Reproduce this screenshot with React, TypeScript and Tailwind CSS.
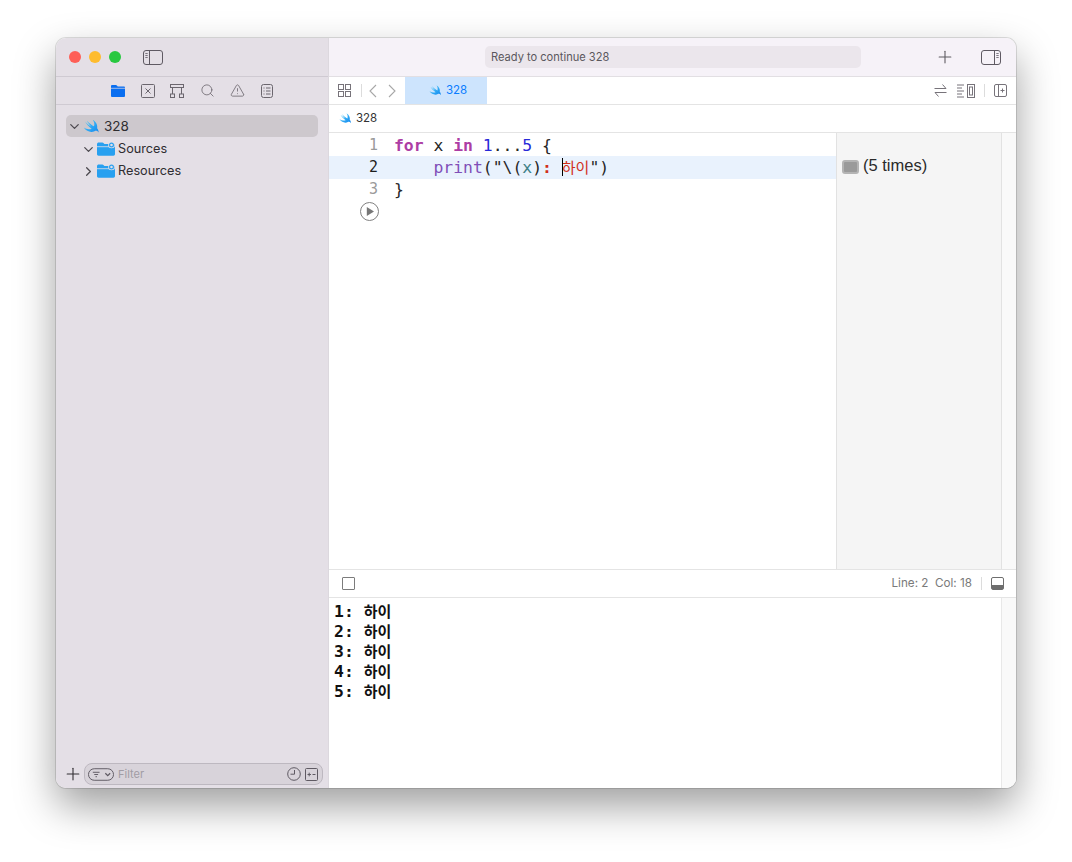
import { ChevronDown, ChevronRight, Plus, Search, TriangleAlert } from "lucide-react";

const mono = "[font-family:'DejaVu_Sans_Mono','Noto_Sans_CJK_KR',monospace]";

function Swift({ size }: { size: number }) {
    return (
        <svg width={size} height={size} viewBox="0 0 24 24" className="shrink-0">
            <defs>
                <linearGradient id="swiftFill" x1="0" y1="0" x2="1" y2="1">
                    <stop offset="0" stopColor="#4fd0fb" />
                    <stop offset="1" stopColor="#1487ee" />
                </linearGradient>
            </defs>
            <path
                d="M1 13.500C5 16.200 9.500 16.500 12.200 15C8.500 12.500 5 9 2.800 5C6 8.500 9.500 11 11.800 12.400C9.200 9.800 6.800 6.800 5.300 3.500C8.500 7.300 12.800 10.500 15.500 11.800C16.800 8.500 15.500 5 13.800 2.500C18.300 5.300 21 10.300 19.900 14.400C21.500 16.400 22.300 18.600 21.800 20.300C20.300 18.100 18 17.700 16.300 18.600C11.500 21 5 19.300 1 13.500Z"
                fill="url(#swiftFill)"
            />
        </svg>
    );
}

function FolderBadge({ className = "" }: { className?: string }) {
    return (
        <svg width="18" height="14" viewBox="0 0 18 14" className={className}>
            <path d="M0 2.200C0 1 .8.4 1.800.4h3.400c.7 0 1 .3 1.500.8l.7.8h9c1 0 1.600.6 1.600 1.600v8.500c0 1-.6 1.600-1.600 1.600H1.600C.6 13.700 0 13 0 12z" fill="#28a0f0" />
            <path d="M0 4.700h17.800" stroke="#e4dfe6" strokeWidth=".8" />
            <circle cx="14.500" cy="3" r="3.300" fill="#e4dfe6" />
            <circle cx="14.500" cy="3" r="1.900" fill="none" stroke="#28a0f0" strokeWidth="1.200" />
        </svg>
    );
}

function NavIcons() {
    const c = "#6b666e";
    return (
        <div className="h-[28px] flex items-center justify-center gap-[15.500px] border-b border-[#cfcad2]">
            <svg width="14" height="12" viewBox="0 0 14 12">
                <path d="M0 1.300C0 .5.500 0 1.300 0h3.500c.5 0 .8.200 1.100.5l.8.900h6c.800 0 1.300.5 1.300 1.300v8c0 .8-.5 1.300-1.300 1.300H1.300C.5 12 0 11.500 0 10.700z" fill="#0a6ef0" />
                <path d="M0 3.300h14" stroke="#e4dfe6" strokeWidth=".7" />
            </svg>
            <svg width="14" height="14" viewBox="0 0 14 14" fill="none" stroke={c}>
                <rect x=".5" y=".5" width="13" height="13" rx="1" />
                <path d="M4.500 4.500l5 5M9.500 4.500l-5 5" />
            </svg>
            <svg width="14" height="14" viewBox="0 0 14 14" fill="none" stroke={c}>
                <rect x=".5" y=".5" width="13" height="3" />
                <rect x=".5" y="10" width="4" height="3.500" />
                <rect x="9.500" y="10" width="4" height="3.500" />
                <path d="M2.500 3.500V10M11.500 3.500V10" />
            </svg>
            <Search size={15} strokeWidth={1.300} color={c} />
            <TriangleAlert size={15} strokeWidth={1.300} color={c} />
            <svg width="12" height="14" viewBox="0 0 12 14" fill="none" stroke={c}>
                <rect x=".5" y=".5" width="11" height="13" rx="2" />
                <path d="M2.500 4h1M5 4h4.500M2.500 7h1M5 7h4.500M2.500 10h1M5 10h4.500" />
            </svg>
        </div>
    );
}

function Sidebar() {
    return (
        <div className="w-[273px] shrink-0 bg-[#e4dfe6] flex flex-col border-r border-[#dcd8de]">
            <div className="h-[39px] flex items-center pl-[13px] border-b border-[#cfcad2]">
                <span className="w-3 h-3 rounded-full bg-[#fe5f57]" />
                <span className="w-3 h-3 rounded-full bg-[#febc2e] ml-2" />
                <span className="w-3 h-3 rounded-full bg-[#28c840] ml-2" />
                <svg width="20" height="15" viewBox="0 0 20 15" fill="none" stroke="#5f5a63" className="ml-[22px]">
                    <rect x=".5" y=".5" width="19" height="14" rx="2.500" />
                    <path d="M6.500 .5v14" />
                    <path d="M2.300 3.500h2.400M2.300 5.500h2.400M2.300 7.500h2.400" strokeWidth=".8" />
                </svg>
            </div>
            <NavIcons />
            <div className="flex-1 pt-[10px] px-[10px] text-[12.700px] text-[#2f2d31]">
                <div className="h-[22px] flex items-center rounded-[5px] bg-[#cdc8cd] pl-[1px] text-[13.500px] mb-px">
                    <ChevronDown size={15} strokeWidth={2} className="text-[#4c494f]" />
                    <span className="ml-[1px]"><Swift size={17} /></span>
                    <span className="ml-[4px]">328</span>
                </div>
                <div className="h-[22px] flex items-center pl-[15px]">
                    <ChevronDown size={15} strokeWidth={2} className="text-[#4c494f]" />
                    <FolderBadge className="ml-[1px]" />
                    <span className="ml-[3px]">Sources</span>
                </div>
                <div className="h-[22px] flex items-center pl-[15px]">
                    <ChevronRight size={15} strokeWidth={2} className="text-[#4c494f]" />
                    <FolderBadge className="ml-[1px]" />
                    <span className="ml-[3px]">Resources</span>
                </div>
            </div>
            <div className="h-[25px] flex items-start pl-[7px] pr-[5px]">
                <Plus size={20} strokeWidth={1.300} className="text-[#302e32] mt-px shrink-0" />
                <div className="ml-[1px] flex-1 h-[22px] rounded-[8px] bg-[#d8d3da] border border-[#bdb8c0] flex items-center pl-[3px] pr-[4px]">
                    <svg width="26" height="13" viewBox="0 0 27 13" fill="none" stroke="#5f5a63">
                        <rect x=".5" y=".5" width="26" height="12" rx="6" />
                        <path d="M5 4.200h7M6.500 6.500h4M7.800 8.800h1.500" />
                        <path d="M18 5.200l2.500 2.500 2.500-2.500" strokeWidth="1.300" />
                    </svg>
                    <span className="ml-[4px] text-[11px] text-[#a19ca4] flex-1">Filter</span>
                    <svg width="14" height="14" viewBox="0 0 14 14" fill="none" stroke="#5f5a63">
                        <circle cx="7" cy="7" r="6.300" />
                        <path d="M7.500 3v4.200H3.500" />
                    </svg>
                    <svg width="13" height="13" viewBox="0 0 13 13" fill="none" stroke="#5f5a63" className="ml-[4px]">
                        <rect x=".5" y=".5" width="12" height="12" rx="1" />
                        <path d="M2.500 6.500h3.500M4.200 4.700v3.600M7.500 6.500h3" />
                    </svg>
                </div>
            </div>
        </div>
    );
}

function EditorBars() {
    const c = "#77737a";
    return (
        <>
            <div className="h-[39px] shrink-0 bg-[#f6f2f8] flex items-center border-b border-[#e2dfe3]">
                <div className="ml-[156px] w-[376px] h-[22px] rounded-[5px] bg-[#ebe6ec] flex items-center pl-[6px] text-[11.100px] text-[#5a575c]">
                    Ready to continue 328
                </div>
                <Plus size={20} strokeWidth={1.300} className="ml-[74px] text-[#5d5a60]" />
                <svg width="20" height="15" viewBox="0 0 20 15" fill="none" stroke="#5f5a63" className="ml-[26px]">
                    <rect x=".5" y=".5" width="19" height="14" rx="2.500" />
                    <path d="M13.500 .5v14" />
                    <path d="M15.300 3.500h2.400M15.300 5.500h2.400M15.300 7.500h2.400" strokeWidth=".8" />
                </svg>
            </div>
            <div className="h-[28px] shrink-0 flex items-center border-b border-[#e4e4e4] bg-white">
                <svg width="13" height="13" viewBox="0 0 13 13" fill="none" stroke={c} className="ml-[9px]">
                    <rect x=".5" y=".5" width="5" height="5" />
                    <rect x="7.500" y=".5" width="5" height="5" />
                    <rect x=".5" y="7.500" width="5" height="5" />
                    <rect x="7.500" y="7.500" width="5" height="5" />
                </svg>
                <span className="ml-[10px] w-px h-[13px] bg-[#dcdcdc]" />
                <svg width="8" height="14" viewBox="0 0 8 14" fill="none" stroke="#a8a8a8" strokeWidth="1.100" className="ml-[7px]">
                    <path d="M7 1L1 7l6 6" />
                </svg>
                <svg width="8" height="14" viewBox="0 0 8 14" fill="none" stroke="#a8a8a8" strokeWidth="1.100" className="ml-[11px]">
                    <path d="M1 1l6 6-6 6" />
                </svg>
                <div className="ml-[9px] w-[82px] h-full bg-[#cde4fd] flex items-center pl-[24px] gap-[4px] text-[11.500px] text-[#0a7cff]">
                    <Swift size={13} />
                    <span className="pt-px">328</span>
                </div>
                <div className="flex-1" />
                <svg width="13" height="13" viewBox="0 0 13 13" fill="none" stroke={c}>
                    <path d="M.5 4.500h11.500M8.500.5L12 4.500M12.500 8.500H1M4.500 12.500L1 8.500" />
                </svg>
                <svg width="18" height="14" viewBox="0 0 18 14" fill="none" stroke={c} className="ml-[10px]">
                    <path d="M0 1h7M0 4h5M0 7h7M0 10h5M0 13h7" />
                    <rect x="10.500" y=".5" width="7" height="13" />
                    <rect x="12.500" y="3" width="3" height="8" />
                </svg>
                <span className="ml-[9px] w-px h-[13px] bg-[#dcdcdc]" />
                <svg width="13" height="13" viewBox="0 0 13 13" fill="none" stroke={c} className="ml-[9px] mr-[9px]">
                    <rect x=".5" y=".5" width="12" height="12" rx="1.500" />
                    <path d="M4.500 .5v12M6.500 6.500h4M8.500 4.500v4" />
                </svg>
            </div>
            <div className="h-[28px] shrink-0 flex items-center pl-[10px] gap-[4px] border-b border-[#e4e4e4] bg-white text-[11.500px] text-[#333]">
                <Swift size={13} />
                <span>328</span>
            </div>
        </>
    );
}

function CodeArea() {
    return (
        <div className="flex-1 flex min-h-0 border-b border-[#e4e4e4] bg-white">
            <div className={`flex-1 text-[16.400px] leading-[23px] text-[#262626] ${mono}`}>
                <div className="flex h-[23px] leading-[25px]">
                    <span className="w-[49px] text-right text-[15px] text-[#9a9a9a]">1</span>
                    <span className="ml-[16px] whitespace-pre">
                        <span className="text-[#ad3da4] font-bold">for</span> x <span className="text-[#ad3da4] font-bold">in</span> <span className="text-[#272ad8]">1</span>...<span className="text-[#272ad8]">5</span> {"{"}
                    </span>
                </div>
                <div className="flex h-[23px] bg-[#e9f2fd]">
                    <span className="w-[49px] text-right text-[15px] text-[#1e1e1e]">2</span>
                    <span className="ml-[16px] whitespace-pre relative">
                        {"    "}<span className="text-[#804fb8]">print</span>{'("\\('}<span className="text-[#3e8087]">x</span>)<span className="text-[#d12f1b] font-bold">: </span>
                        <span className="text-[#d12f1b] text-[15px]">하이</span>{'")'}
                        <span className="absolute left-[167.500px] top-[2px] w-px h-[18px] bg-black" />
                    </span>
                </div>
                <div className="flex h-[23px] leading-[21px]">
                    <span className="w-[49px] text-right text-[15px] text-[#9a9a9a]">3</span>
                    <span className="ml-[16px]">{"}"}</span>
                </div>
                <div className="pl-[31px]">
                    <svg width="19" height="19" viewBox="0 0 19 19" fill="none">
                        <circle cx="9.500" cy="9.500" r="9" stroke="#808080" />
                        <path d="M6.800 5l7.200 4.500-7.200 4.500z" fill="#777" />
                    </svg>
                </div>
            </div>
            <div className="w-[165px] shrink-0 bg-[#f5f5f5] border-l border-[#e2e2e2] pt-[21px]">
                <div className="h-[23px] flex items-center pl-[5px] gap-[4px] text-[16.500px] text-[#2a2a2a] [font-family:'Liberation_Sans',sans-serif]">
                    <span className="w-[17px] h-[14px] rounded-[3px] border-2 border-[#b4b4b4] bg-[#9a9a9a] shrink-0 mt-[2px]" />
                    (5 times)
                </div>
            </div>
            <div className="w-[15px] shrink-0 bg-[#f9f9f9] border-l border-[#e2e2e2]" />
        </div>
    );
}

function DebugBar() {
    return (
        <div className="h-[28px] shrink-0 flex items-center bg-white border-b border-[#e4e4e4] pl-[13px]">
            <span className="w-[13px] h-[13px] rounded-[1px] border border-[#7c7c7c]" />
            <div className="flex-1" />
            <span className="text-[11.700px] pt-px text-[#7a7a7a] whitespace-pre">Line: 2  Col: 18</span>
            <span className="ml-[9px] w-px h-[13px] bg-[#dcdcdc]" />
            <span className="ml-[9px] mr-[12px] w-[13px] h-[13px] rounded-[2px] border border-[#6e6e6e] flex items-end">
                <span className="w-full h-[4px] bg-[#6e6e6e]" />
            </span>
        </div>
    );
}

function Console() {
    const lines = [1, 2, 3, 4, 5];
    return (
        <div className="h-[190px] shrink-0 flex bg-white">
            <div className={`flex-1 pl-[5px] pt-[4px] text-[16.400px] leading-[20px] font-bold text-[#111] ${mono}`}>
                {lines.map((n) => (
                    <div key={n} className="whitespace-pre">
                        {n}:{" "}
                        <span className="text-[15px]">하이</span>
                    </div>
                ))}
            </div>
            <div className="w-[15px] shrink-0 bg-[#f9f9f9] border-l border-[#e8e8e8]" />
        </div>
    );
}

export default function App() {
    return (
        <div className="w-[1072px] h-[862px] bg-white pl-[56px] pt-[38px] overflow-hidden [font-family:'Inter','Liberation_Sans',sans-serif]">
            <div className="w-[960px] h-[750px] rounded-[10px] overflow-hidden flex shadow-[0_0_0_1px_rgba(0,0,0,0.12),0_18px_40px_rgba(0,0,0,0.38)]">
                <Sidebar />
                <div className="flex-1 flex flex-col min-w-0">
                    <EditorBars />
                    <CodeArea />
                    <DebugBar />
                    <Console />
                </div>
            </div>
        </div>
    );
}
